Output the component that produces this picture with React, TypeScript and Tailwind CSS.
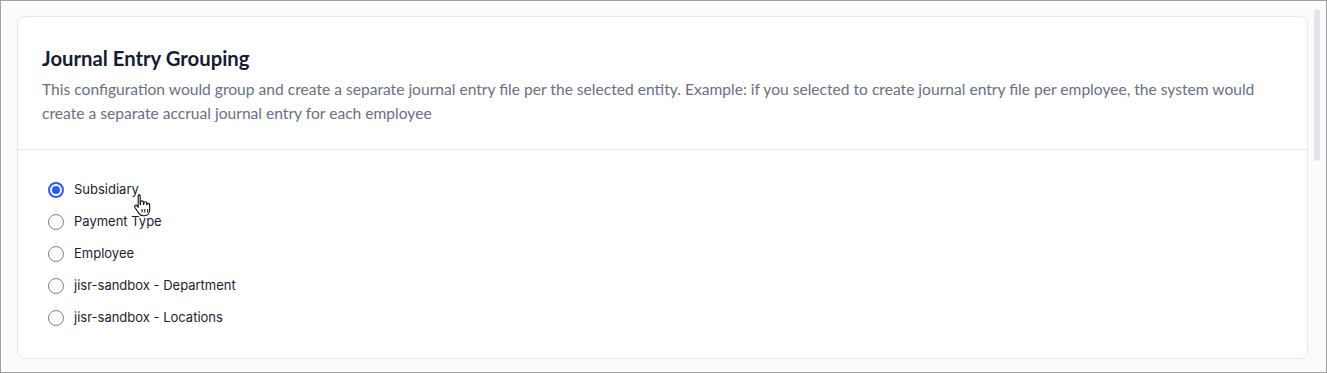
import React from "react";

const options = [
  "Subsidiary",
  "Payment Type",
  "Employee",
  "jisr-sandbox - Department",
  "jisr-sandbox - Locations",
];

function Radio({ checked }: { checked: boolean }) {
  return checked ? (
    <span className="flex h-4 w-4 items-center justify-center rounded-full border-2 border-[#2f5bf2] bg-white">
      <span className="h-[8px] w-[8px] rounded-full bg-[#2f5bf2]" />
    </span>
  ) : (
    <span className="h-4 w-4 rounded-full border-[1.5px] border-[#7b7f8c] bg-white" />
  );
}

function HandCursor() {
  return (
    <svg width="18" height="25" viewBox="0 0 16 22" className="absolute left-[85px] top-[19px]">
      <path
        d="M5 1.5c.8 0 1.4.6 1.4 1.4V10h.3V8.2c0-.8.6-1.3 1.3-1.3s1.3.5 1.3 1.3V10h.3V9c0-.8.6-1.3 1.3-1.3s1.3.5 1.3 1.3v1.3h.2c0-.7.6-1.2 1.2-1.2.7 0 1.2.5 1.2 1.2v4.8c0 2.8-1.9 5-4.6 5H9c-1.6 0-2.9-.8-3.8-2.1L1.6 12.6c-.4-.6-.2-1.4.4-1.7.6-.4 1.3-.2 1.7.4l.9 1.3V2.9c0-.8.6-1.4 1.4-1.4z"
        fill="#fff"
        stroke="#111"
        strokeWidth="1"
        strokeLinejoin="round"
      />
      <path d="M8 14v3.2M10.5 14v3.2M13 14v3.2" stroke="#111" strokeWidth="0.9" />
    </svg>
  );
}

export default function App() {
  return (
    <div className="h-[373px] w-[1327px] overflow-hidden border border-[#a0a0a0] bg-[#fbfbfc]">
      <div className="flex h-full pl-4 pt-[15px]">
        <div className="h-[343px] w-[1291px] rounded-lg border border-[#e6e8ec] bg-white">
          <div className="border-b border-[#e6e8ec] px-6 pb-6 pt-[27px]">
            <h2
              className="text-[20.3px] font-bold leading-[28px] text-[#161b33]"
              style={{ fontFamily: "Lato, 'Liberation Sans', sans-serif" }}
            >
              Journal Entry Grouping
            </h2>
            <p
              className="mt-[5px] text-[15.6px] leading-[24px] text-[#6b6f82]"
              style={{ fontFamily: "Lato, 'Liberation Sans', sans-serif" }}
            >
              This configuration would group and create a separate journal entry file per the selected entity.
              Example: if you selected to create journal entry file per employee, the system would create a
              separate accrual journal entry for each employee
            </p>
          </div>
          <div className="px-[30px] py-6">
            {options.map((o, i) => (
              <div key={o} className="relative flex h-8 items-center gap-[10px]">
                <Radio checked={i === 0} />
                <span
                  className="text-[13px] text-[#1b1e2e]"
                  style={{ fontFamily: "Inter, 'Noto Sans', sans-serif" }}
                >
                  {o}
                </span>
                {i === 0 && <HandCursor />}
              </div>
            ))}
          </div>
        </div>
        <div className="ml-[6px] mt-[-7px] h-[152px] w-[6px] rounded-full bg-[#e3e5ea]" />
      </div>
    </div>
  );
}
